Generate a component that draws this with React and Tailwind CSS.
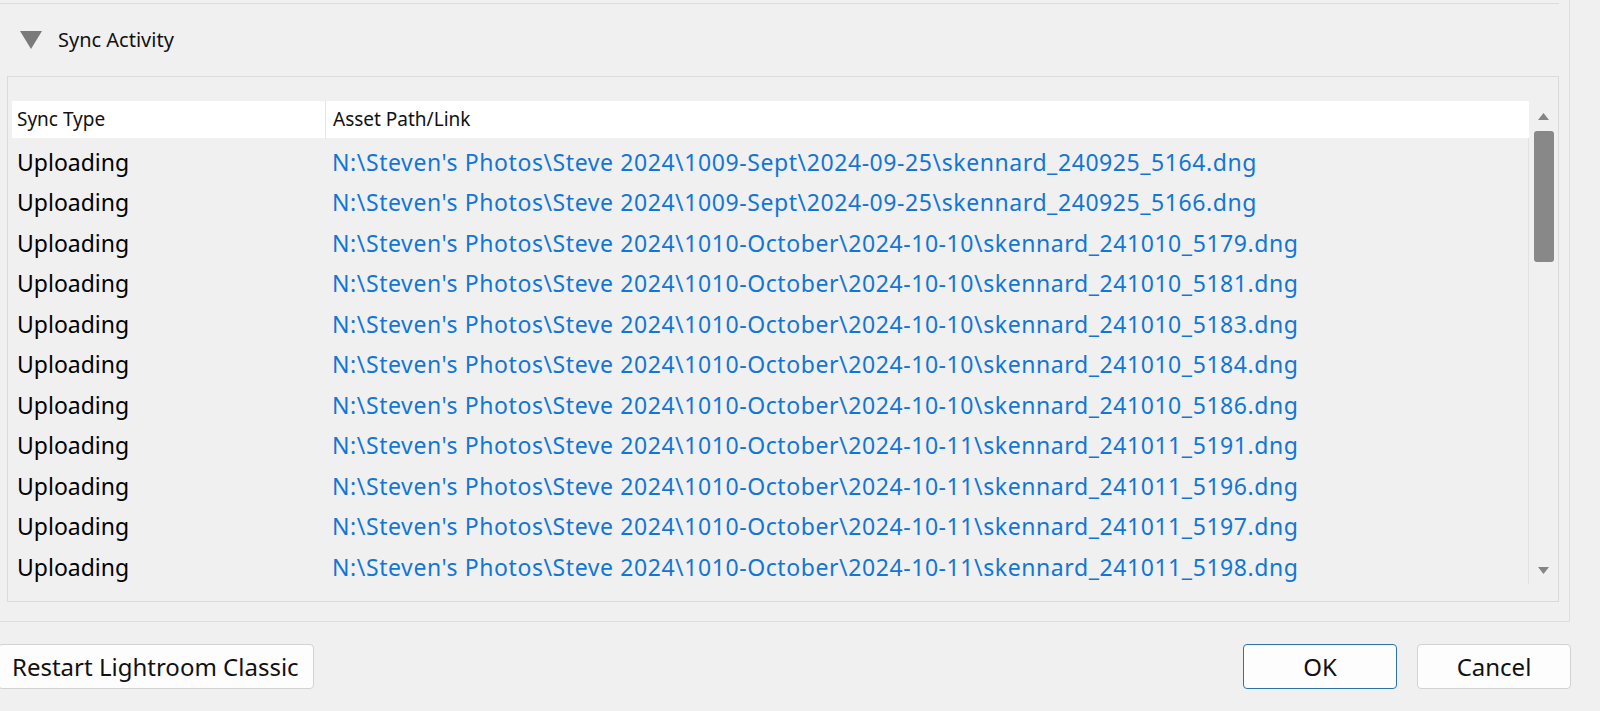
import React from "react";

const rows = [
  "N:\\Steven's Photos\\Steve 2024\\1009-Sept\\2024-09-25\\skennard_240925_5164.dng",
  "N:\\Steven's Photos\\Steve 2024\\1009-Sept\\2024-09-25\\skennard_240925_5166.dng",
  "N:\\Steven's Photos\\Steve 2024\\1010-October\\2024-10-10\\skennard_241010_5179.dng",
  "N:\\Steven's Photos\\Steve 2024\\1010-October\\2024-10-10\\skennard_241010_5181.dng",
  "N:\\Steven's Photos\\Steve 2024\\1010-October\\2024-10-10\\skennard_241010_5183.dng",
  "N:\\Steven's Photos\\Steve 2024\\1010-October\\2024-10-10\\skennard_241010_5184.dng",
  "N:\\Steven's Photos\\Steve 2024\\1010-October\\2024-10-10\\skennard_241010_5186.dng",
  "N:\\Steven's Photos\\Steve 2024\\1010-October\\2024-10-11\\skennard_241011_5191.dng",
  "N:\\Steven's Photos\\Steve 2024\\1010-October\\2024-10-11\\skennard_241011_5196.dng",
  "N:\\Steven's Photos\\Steve 2024\\1010-October\\2024-10-11\\skennard_241011_5197.dng",
  "N:\\Steven's Photos\\Steve 2024\\1010-October\\2024-10-11\\skennard_241011_5198.dng",
];

const App = () => {
  return (
    <div className="relative h-[711px] w-[1600px] overflow-hidden bg-[#f0f0f0] text-[#111] font-['Noto_Sans',sans-serif]">
      {/* dialog body */}
      <div className="flex h-[622px] w-[1570px] flex-col border-r border-b border-[#dedede]">
        <div className="h-[4px] w-[1559px] shrink-0 border-b border-[#dcdcdc]" />

        {/* section header */}
        <div className="flex h-[72px] shrink-0 items-center">
          <svg className="ml-[20px]" width="22" height="18" viewBox="0 0 22 18">
            <polygon points="0,0 22,0 11,18" fill="#7a7a7a" />
          </svg>
          <span className="ml-[16px] text-[20px] leading-none">Sync Activity</span>
        </div>

        {/* table box */}
        <div className="ml-[7px] flex h-[526px] w-[1552px] shrink-0 border border-[#dadada] pt-[24px] pl-[4px] pb-[17px]">
          <div className="flex w-[1517px] flex-col">
            <div className="flex h-[37px] shrink-0 items-center bg-white text-[19px]">
              <div className="flex h-full w-[314px] items-center border-r border-[#e6e6e6] pl-[5px]">Sync Type</div>
              <div className="pl-[7px]">Asset Path/Link</div>
            </div>
            <div className="flex flex-1 flex-col overflow-hidden border-r border-[#e2e2e2]">
              {rows.map((path, i) => (
                <div key={i} className="flex h-[40.5px] shrink-0 items-center pt-[8px] text-[23px] leading-none">
                  <div className="w-[314px] pl-[5px] text-black">Uploading</div>
                  <div className="whitespace-nowrap pl-[6px] tracking-[0.58px] text-[#1276d4]">{path}</div>
                </div>
              ))}
            </div>
          </div>

          {/* scrollbar */}
          <div className="flex w-[29px] flex-col items-center">
            <svg className="mt-[12px]" width="11" height="7" viewBox="0 0 11 7">
              <polygon points="0,7 11,7 5.5,0" fill="#858585" />
            </svg>
            <div className="mt-[11px] h-[131px] w-[20px] rounded-[3px] bg-[#888888]" />
            <div className="flex-1" />
            <svg className="mb-[10px]" width="11" height="7" viewBox="0 0 11 7">
              <polygon points="0,0 11,0 5.5,7" fill="#858585" />
            </svg>
          </div>
        </div>
      </div>

      {/* footer buttons */}
      <div className="mt-[22px] flex items-center text-[24px]">
        <button className="ml-[-2px] flex h-[45px] w-[316px] items-center rounded-[4px] border border-[#d2d2d2] bg-[#fdfdfd] pl-[13px]">
          Restart Lightroom Classic
        </button>
        <div className="flex-1" />
        <button className="flex h-[45px] w-[154px] items-center justify-center rounded-[4px] border border-[#2b74a8] bg-[#fdfdfd]">
          OK
        </button>
        <button className="ml-[20px] mr-[29px] flex h-[45px] w-[154px] items-center justify-center rounded-[4px] border border-[#d2d2d2] bg-[#fdfdfd]">
          Cancel
        </button>
      </div>
    </div>
  );
};

export default App;
